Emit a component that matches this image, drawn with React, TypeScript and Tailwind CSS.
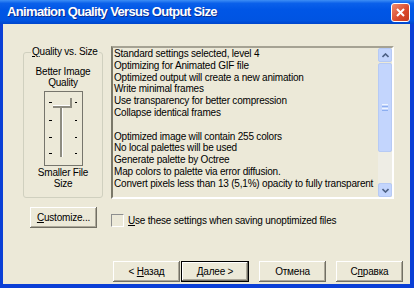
const lines = [
  "Standard settings selected, level 4",
  "Optimizing for Animated GIF file",
  "Optimized output will create a new animation",
  "Write minimal frames",
  "Use transparency for better compression",
  "Collapse identical frames",
  "",
  "Optimized image will contain 255 colors",
  "No local palettes will be used",
  "Generate palette by Octree",
  "Map colors to palette via error diffusion.",
  "Convert pixels less than 13 (5,1%) opacity to fully transparent",
];

const Button = ({ children, def }: { children: React.ReactNode; def?: boolean }) => (
  <button
    className={
      def
        ? "h-[21px] w-[68px] border border-black bg-[#ECE9D8] text-[10px] tracking-[-0.2px] text-black shadow-[inset_-1px_-1px_0_#716F64,inset_1px_1px_0_#FFFFFF,inset_-2px_-2px_0_#ACA899]"
        : "h-[21px] w-[67px] bg-[#ECE9D8] text-[10px] tracking-[-0.2px] text-black shadow-[inset_-1px_-1px_0_#716F64,inset_1px_1px_0_#FFFFFF,inset_-2px_-2px_0_#ACA899]"
    }
  >
    {children}
  </button>
);

const Slider = () => (
  <svg width="39" height="75" viewBox="0 0 39 75" className="mx-auto mt-[3px] block">
    <rect x="0.5" y="0.5" width="38" height="74" fill="none" stroke="#000" strokeDasharray="1 1" />
    {[11, 29, 46, 62].map((y) => (
      <g key={y}>
        <line x1="5" x2="8" y1={y + 0.5} y2={y + 0.5} stroke="#000" />
        <line x1="31" x2="33" y1={y + 0.5} y2={y + 0.5} stroke="#000" />
      </g>
    ))}
    <line x1="9" x2="28" y1="16" y2="16" stroke="#8E8C80" strokeWidth="2" />
    <line x1="9" x2="27" y1="14.5" y2="14.5" stroke="#FFFFFF" />
    <line x1="27" x2="27" y1="7" y2="16" stroke="#8E8C80" strokeWidth="2" />
    <line x1="17" x2="17" y1="16" y2="66" stroke="#8E8C80" strokeWidth="2" />
    <line x1="18.5" x2="18.5" y1="17" y2="66" stroke="#FFFFFF" />
  </svg>
);

const ScrollBtn = ({ up }: { up?: boolean }) => (
  <div className="flex h-[14px] w-[14px] items-center justify-center rounded-[2px] border border-[#B6CAF5] bg-[#C3D5FD]">
    <svg width="7" height="5" viewBox="0 0 7 5">
      <polyline
        points={up ? "0.5,4 3.5,1 6.5,4" : "0.5,1 3.5,4 6.5,1"}
        fill="none"
        stroke="#4D6185"
        strokeWidth="1.6"
      />
    </svg>
  </div>
);

export default function App() {
  return (
    <div className="flex h-[288px] w-[414px] flex-col bg-[#0A3FD6] font-['Liberation_Sans',Arial,sans-serif] text-black">
      <div className="flex h-[24px] shrink-0 items-center justify-between bg-[linear-gradient(to_bottom,#3D8EF5_0%,#0A60EA_14%,#0056E6_40%,#0054E2_85%,#0046CC_100%)] pl-[7px] pr-[4px]">
        <span className="text-[13px] font-bold tracking-[-0.65px] text-white [text-shadow:1px_1px_#0B2C8F]">
          Animation Quality Versus Output Size
        </span>
        <div className="flex h-[19px] w-[19px] items-center justify-center rounded-[3px] border border-white bg-[linear-gradient(135deg,#EF8B6E,#D9482A_60%,#C53A1E)]">
          <svg width="9" height="9" viewBox="0 0 9 9">
            <path d="M1 1L8 8M8 1L1 8" stroke="#fff" strokeWidth="2" />
          </svg>
        </div>
      </div>

      <div className="mb-[4px] ml-[3px] mr-[4px] flex flex-1 flex-col bg-[#ECE9D8] text-[10px]">
        <div className="flex items-start pl-[20px] pt-[22px]">
          <fieldset className="h-[152px] w-[80px] rounded-[3px] border border-[#D0D0BF]">
            <legend className="ml-[7px] px-[1px] leading-[12px] tracking-[-0.2px]">
              <span className="underline">Q</span>uality vs. Size
            </legend>
            <div className="pt-[8px] text-center leading-[11px] tracking-[-0.2px]">
              <div>Better Image</div>
              <div>Quality</div>
            </div>
            <Slider />
            <div className="pt-[1px] text-center leading-[11px] tracking-[-0.2px]">
              <div>Smaller File</div>
              <div>Size</div>
            </div>
          </fieldset>

          <div className="ml-[8px] flex h-[153px] w-[283px] border-2 border-b-[#FFFFFF] border-l-[#7A7869] border-r-[#FFFFFF] border-t-[#A5A293]">
            <div className="flex-1 overflow-hidden pl-[1px] leading-[11.8px] tracking-[-0.2px]">
              {lines.map((l, i) => (
                <div key={i} className="h-[11.8px] whitespace-nowrap">
                  {l}
                </div>
              ))}
            </div>
            <div className="flex w-[14px] flex-col">
              <ScrollBtn up />
              <div className="mt-[1px] flex h-[89px] items-center justify-center rounded-[2px] border border-[#B6CAF5] bg-[#C3D5FD]">
                <div className="flex flex-col gap-[1px]">
                  <div className="h-[1px] w-[6px] bg-[#EEF4FE]" />
                  <div className="h-[1px] w-[6px] bg-[#8CAEF0]" />
                  <div className="h-[1px] w-[6px] bg-[#EEF4FE]" />
                  <div className="h-[1px] w-[6px] bg-[#8CAEF0]" />
                </div>
              </div>
              <div className="flex-1 bg-[#EEEDE5]" />
              <ScrollBtn />
            </div>
          </div>
        </div>

        <div className="mt-[8px] flex items-center">
          <div className="ml-[27px]">
            <Button>
              <span className="underline">C</span>ustomize...
            </Button>
          </div>
          <div className="ml-[14px] mt-[6px] flex items-center">
            <div className="h-[13px] w-[13px] border border-b-[#FFFFFF] border-l-[#8E8F8F] border-r-[#FFFFFF] border-t-[#8E8F8F]" />
            <span className="ml-[4px] tracking-[-0.2px]">
              <span className="underline">U</span>se these settings when saving unoptimized files
            </span>
          </div>
        </div>

        <div className="mt-auto flex justify-end pb-[2px] pr-[7px]">
          <Button>
            &lt; <span className="underline">Н</span>азад
          </Button>
          <div className="ml-[1px]">
            <Button def>
              <span className="underline">Д</span>алее &gt;
            </Button>
          </div>
          <div className="ml-[10px]">
            <Button>Отмена</Button>
          </div>
          <div className="ml-[10px]">
            <Button>
              С<span className="underline">п</span>равка
            </Button>
          </div>
        </div>
      </div>
    </div>
  );
}
